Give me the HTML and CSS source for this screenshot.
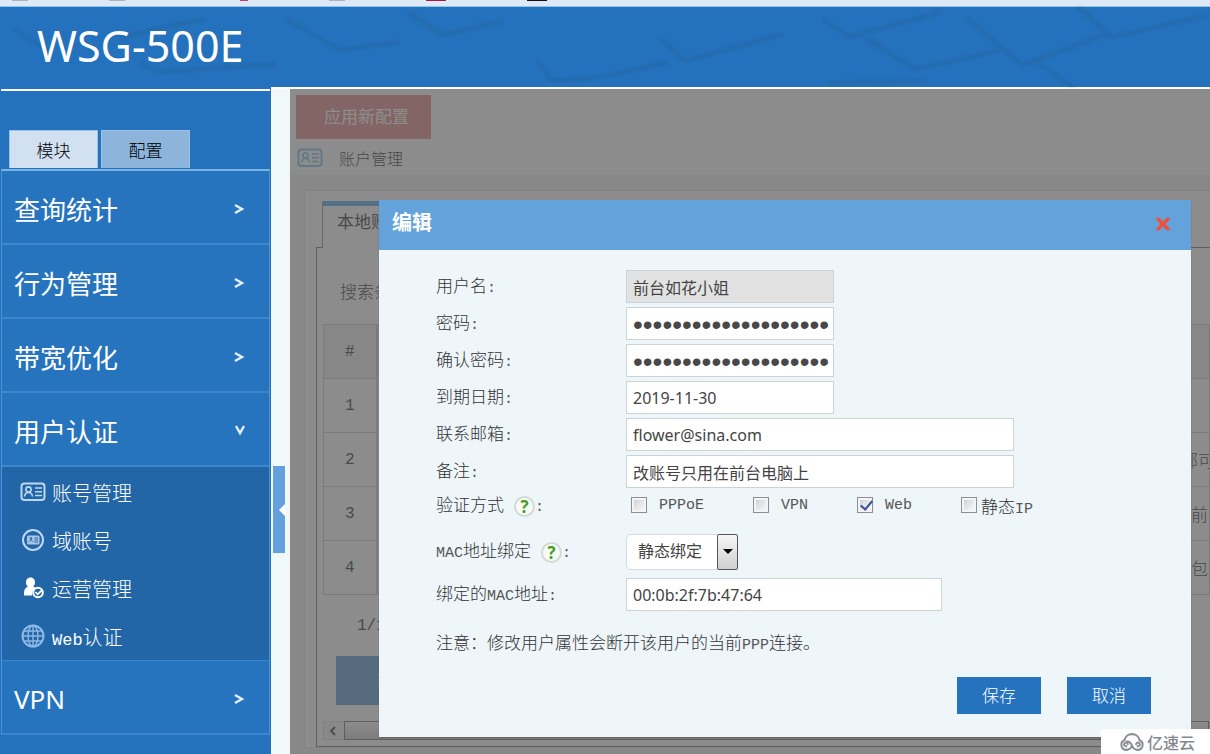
FILE: index.html
```html
<!DOCTYPE html>
<html lang="zh-CN">
<head>
<meta charset="utf-8">
<title>WSG-500E</title>
<link rel="stylesheet" href="styles.css">
</head>
<body>
<svg class="defs" aria-hidden="true">
  <symbol id="card" viewBox="0 0 26 20">
    <rect x="1.5" y="1.5" width="23" height="16.500" rx="3" fill="none" stroke="currentColor" stroke-width="2"/>
    <circle cx="8.500" cy="7.500" r="2.600" fill="none" stroke="currentColor" stroke-width="1.600"/>
    <path d="M4.500 14.500c.3-2.600 1.800-4 4-4s3.700 1.400 4 4M15 6h7M15 9.800h7M15 13.500h7" fill="none" stroke="currentColor" stroke-width="1.600"/>
  </symbol>
</svg>
<div class="strip"><i class="dot"></i><i class="dot"></i><i class="dot rose"></i><i class="dot"></i><i class="dot red"></i><i class="dot black"></i></div>
<header class="top">
  <svg class="keys" viewBox="0 0 1210 80" preserveAspectRatio="xMinYMin slice" aria-hidden="true">
    <g fill="none" stroke="#266099" stroke-opacity=".34" stroke-width="5" stroke-linejoin="round">
      <path d="M14 22l34 22M120 30l84-18M140 56l20 9 116-8M286 12l54 31 60-8M408 6l36 22 60-14M537 54l14 19c40 2 80-10 118-18"/>
      <path d="M661 32l24 22 99-27M822 12l28 18 90-25M866 32l50 30c30-6 60-14 88-20M966 10l56 48 88-32M1036 54l56 40M1078 0l34 30 98-22M826 76l100-2"/>
    </g>
  </svg>
  <h1>WSG-500E</h1>
</header>
<div class="page">
  <nav class="side">
    <div class="tabs"><button class="tab on">模块</button><button class="tab">配置</button></div>
    <ul class="menu">
      <li><a href="#"><span>查询统计</span><svg viewBox="0 0 12 12"><path d="M2 2l7 4-7 4"/></svg></a></li>
      <li><a href="#"><span>行为管理</span><svg viewBox="0 0 12 12"><path d="M2 2l7 4-7 4"/></svg></a></li>
      <li><a href="#"><span>带宽优化</span><svg viewBox="0 0 12 12"><path d="M2 2l7 4-7 4"/></svg></a></li>
      <li><a href="#"><span>用户认证</span><svg viewBox="0 0 12 12"><path d="M3 1l4 7 4-7"/></svg></a>
        <ul class="sub">
          <li><a href="#"><svg viewBox="0 0 26 20"><use href="#card"/></svg>账号管理</a></li>
          <li><a href="#"><svg viewBox="0 0 24 24"><circle cx="12" cy="12" r="10" fill="none" stroke="currentColor" stroke-width="2"/><rect x="6" y="7.500" width="12.500" height="9" rx="1.500" fill="#a9c6e4"/><path d="M8 14c.3-2 3.700-2 4 0M13.500 10h3.500M13.500 12h3.500M13.500 14h3.500" stroke="#2266a8" fill="none"/><circle cx="10" cy="10.500" r="1.200" fill="#2266a8"/></svg>域账号</a></li>
          <li><a href="#"><svg viewBox="0 0 24 24"><path d="M9.500 1.500c3 0 4.500 2.300 4.500 5 0 2-.8 3.200-1.800 4.200 1.500.5 2.900 1 4 1.800-4 .5-6 3.500-5 7H3c0-5 .3-7.500 4-8.800C5.700 9.700 5 8.500 5 6.500c0-2.700 1.500-5 4.500-5z" fill="#fff"/><circle cx="17" cy="16.500" r="4.800" fill="none" stroke="#fff" stroke-width="2"/><path d="M14.500 16l2.200 2.300 4-4" fill="none" stroke="#fff" stroke-width="1.800"/></svg>运营管理</a></li>
          <li><a href="#"><svg class="globe" viewBox="0 0 24 24"><g fill="none" stroke="currentColor" stroke-width="1.400"><circle cx="12" cy="12" r="10.500" stroke-width="2"/><ellipse cx="12" cy="12" rx="5" ry="10.500"/><path d="M12 1v22M1 12h22M3 7h18M3 17h18"/></g></svg><span><span class="mono">Web</span>认证</span></a></li>
        </ul>
      </li>
      <li><a href="#"><span>VPN</span><svg viewBox="0 0 12 12"><path d="M2 2l7 4-7 4"/></svg></a></li>
    </ul>
  </nav>
  <div class="gutter"><button class="handle" aria-label="收起"></button></div>
  <main class="main">
    <div class="bar"><button class="apply">应用新配置</button></div>
    <div class="crumb"><svg viewBox="0 0 26 20"><use href="#card"/></svg><span>账户管理</span></div>
    <div class="well">
      <section class="panel">
        <div class="ptab">本地账户</div>
        <div class="inner">
          <div class="search">搜索条件</div>
          <table>
            <tr><th>#</th><th></th></tr>
            <tr><td>1</td><td></td></tr>
            <tr><td>2</td><td><span class="cut wide">全部可</span></td></tr>
            <tr><td>3</td><td><span class="cut">前台</span></td></tr>
            <tr><td>4</td><td><span class="cut">包括</span></td></tr>
          </table>
          <div class="pager">1/1</div>
          <button class="add">新增账户</button>
          <div class="scroll"><svg viewBox="0 0 10 10"><path d="M7 1L3 5l4 4" fill="none" stroke="#444" stroke-width="2"/></svg><i></i></div>
        </div>
      </section>
    </div>
    <div class="overlay">
      <section class="dialog" role="dialog" aria-labelledby="dt">
        <div class="dhead"><h2 id="dt">编辑</h2><button class="close" aria-label="关闭"><svg viewBox="0 0 16 16"><path d="M3 3l10 10M13 3L3 13" stroke="#f0513c" stroke-width="3.500" stroke-linecap="round"/></svg></button></div>
        <form class="form">
          <div class="row"><label for="u">用户名<span class="mono">:</span></label><input id="u" class="w1 off" value="前台如花小姐" readonly></div>
          <div class="row"><label for="p">密码<span class="mono">:</span></label><input id="p" class="w1 pw" type="password" value="12345678901234567890"></div>
          <div class="row"><label for="p2">确认密码<span class="mono">:</span></label><input id="p2" class="w1 pw" type="password" value="12345678901234567890"></div>
          <div class="row"><label for="d">到期日期<span class="mono">:</span></label><input id="d" class="w1" value="2019-11-30"></div>
          <div class="row"><label for="m">联系邮箱<span class="mono">:</span></label><input id="m" class="w3" value="flower@sina.com"></div>
          <div class="row"><label for="r">备注<span class="mono">:</span></label><input id="r" class="w3" value="改账号只用在前台电脑上"></div>
          <div class="row short"><span class="lab">验证方式<i class="help">?</i><span class="mono">:</span></span>
            <div class="checks">
              <label><input type="checkbox"><span class="mono">PPPoE</span></label>
              <label><input type="checkbox"><span class="mono">VPN</span></label>
              <label><input type="checkbox" checked><span class="mono">Web</span></label>
              <label class="tight"><input type="checkbox"><span>静态<span class="mono">IP</span></span></label>
            </div>
          </div>
          <div class="row tall"><label for="b"><span class="mono">MAC</span>地址绑定<i class="help">?</i><span class="mono">:</span></label>
            <div class="pick"><select id="b"><option>静态绑定</option></select><i class="arrow"></i></div></div>
          <div class="row"><label for="mac">绑定的<span class="mono">MAC</span>地址<span class="mono">:</span></label><input id="mac" class="w2" value="00:0b:2f:7b:47:64"></div>
          <p class="note">注意：修改用户属性会断开该用户的当前<span class="mono">PPP</span>连接。</p>
          <div class="acts"><button type="button">保存</button><button type="button">取消</button></div>
        </form>
      </section>
    </div>
  </main>
</div>
<div class="mark"><svg viewBox="0 0 28 20"><g fill="none" stroke="#8b8f96" stroke-width="2.200" stroke-linecap="round"><path d="M8 18.500a5.500 5.500 0 0 1-2-10.600C6.500 4 10 1.500 14 1.500s7.500 2.500 8 6.400a5.500 5.500 0 0 1-2 10.600c-3 0-5-2-6-4.500s-3-5-5.500-4.500"/><path d="M8 18.500c3 0 5-2 6-4.500M8 14.500a2 2 0 1 1 1.500-2M20 14.500a2 2 0 1 0-1.500-2"/></g></svg><span>亿速云</span></div>
</body>
</html>
```
FILE: styles.css
```css
* { box-sizing: border-box; }
body { margin: 0; height: 100vh; overflow: hidden; display: flex; flex-direction: column; background: #2472bd; font-family: "Liberation Sans", "Noto Sans CJK SC", sans-serif; font-size: 17px; font-weight: 300; color: #333; }
button, input, select { font: inherit; color: inherit; border: 0; padding: 0; margin: 0; border-radius: 0; }
ul { list-style: none; margin: 0; padding: 0; }
a { color: inherit; text-decoration: none; }
i { font-style: normal; }
.mono { font-family: "Liberation Mono", monospace; font-size: 15px; }
.form .mono { color: #555; }
.defs { position: absolute; width: 0; height: 0; }

.strip { flex: none; height: 7px; background: #dde9f7; border-bottom: 1px solid #94c4ea; display: flex; gap: 81px; padding-left: 12px; }
.dot { width: 16px; height: 1px; background: #aeb4bd; }
.dot.rose { width: 8px; margin-left: 34px; background: #b0446a; }
.dot.red { width: 20px; background: #a81e40; }
.dot.black { width: 20px; background: #111; }

.top { flex: none; height: 80px; position: relative; background: #2472bd; padding: 0 0 4px 37px; display: flex; align-items: center; }
.keys { position: absolute; inset: 0; width: 100%; height: 100%; filter: blur(1px); }
h1 { position: relative; margin: 0; font: 400 43px "Noto Sans", sans-serif; color: #fff; }

.page { flex: 1; min-height: 0; display: flex; border-top: 2px solid #fff; }
.side { flex: none; width: 271px; margin-top: -2px; padding: 2px 1px 0; background: #2472bd; color: #fff; }
.tabs { display: flex; gap: 3px; align-items: flex-end; height: 80px; padding: 0 0 1px 8px; border-top: 2px solid #fff; }
.tab { width: 89px; height: 38px; background: #8db5dc; color: #000; border: 1px solid #9ec1e4; border-bottom: 0; }
.tab.on { background: #d2e1f1; }
.menu { border: 1px solid #4b92d6; border-width: 0 1px; border-top: 2px solid #7db4e6; }
.menu > li > a { display: flex; justify-content: space-between; align-items: center; height: 74px; padding: 3px 24px 0 12px; border-bottom: 2px solid #3c87d0; background: #2673be; font-size: 26px; font-family: "Noto Sans", "Noto Sans CJK SC", sans-serif; font-weight: 400; }
.menu > li > a svg { width: 12px; height: 12px; fill: none; stroke: #e4f1fc; stroke-width: 2.4; }
.sub { background: #2266a8; padding-top: 1px; border-bottom: 1px solid #3c87d0; }
.sub a { display: flex; align-items: center; gap: 6px; height: 48px; padding-left: 18px; font-size: 20px; }
.sub svg { width: 26px; height: 24px; color: #bcd8f2; }
.sub .globe { color: #8db9e4; }
.sub .mono { font-size: 17px; }

.gutter { flex: none; width: 19px; background: #f0f9f8; padding: 377px 5px 0 2px; }
.handle { display: flex; width: 12px; height: 87px; background: #64a0dd; align-items: center; justify-content: flex-end; }
.handle::before { content: ""; border: 6px solid transparent; border-left: 0; border-right-color: #fff; }

.main { flex: 1; min-width: 0; position: relative; display: flex; flex-direction: column; background: #fff; overflow: hidden; }
.bar { padding: 6px 6px 0; }
.apply { display: block; width: 135px; height: 44px; background: #e48a8a; color: #fff; font-size: 17px; font-weight: 400; padding: 0 0 3px 6px; }
.crumb { display: flex; align-items: center; gap: 16px; height: 37px; padding: 1px 8px 0 7px; font-size: 16px; border-bottom: 1px solid #f2f2f2; }
.crumb svg { width: 26px; height: 20px; color: #7fc0ec; }
.well { flex: 1; background: #f1f1f1; padding: 14px 0 0 14px; }
.panel { height: 558px; background: #fff; border: 1px solid #e2e2e2; border-right: 0; padding: 10px 0 0 11px; }
.ptab { position: relative; width: 120px; height: 47px; margin-left: 6px; border-top: 5px solid #5aabea; border-left: 1px solid #999; background: #fff; padding: 2px 0 0 14px; font-weight: 400; }
.inner { height: 500px; margin-top: -1px; border: 1px solid #777; border-right: 0; padding-left: 6px; }
.search { height: 76px; padding: 30px 0 0 17px; }
table { width: 100%; border-collapse: collapse; table-layout: fixed; }
td, th { height: 54px; border: 1px solid #ccc; padding: 0; font: 300 16px "Liberation Mono", monospace; text-align: center; }
th { background: #eee; }
td:first-child, th:first-child { width: 53px; border-right-width: 2px; }
td:last-child { text-align: right; white-space: nowrap; overflow: hidden; }
.cut { display: inline-block; font: 300 17px "Noto Sans CJK SC", sans-serif; margin-right: -16px; }
.cut.wide { margin-right: -6px; }
.pager { height: 61px; padding: 22px 0 0 34px; font-family: "Liberation Mono", monospace; font-size: 16px; }
.add { display: block; width: 150px; height: 49px; margin-left: 13px; background: #5a98d2; color: #fff; }
.scroll { display: flex; align-items: center; height: 19px; margin-top: 16px; background: #f4f4f4; border: 1px solid #ddd; }
.scroll svg { width: 10px; height: 10px; margin: 0 6px 0 4px; }
.scroll i { flex: 1; height: 19px; background: linear-gradient(#fff, #ccc); border: 1px solid #777; }

.overlay { position: absolute; inset: 0; background: rgba(84, 84, 84, .67); padding: 111px 19px 0 89px; }
.dialog { background: #eef6fa; box-shadow: 0 1px 1px #666; }
.dhead { display: flex; justify-content: space-between; align-items: center; height: 50px; padding: 0 20px 2px 13px; background: #64a2dc; color: #fff; }
h2 { margin: 0; font-size: 20px; line-height: 26px; padding-bottom: 2px; font-weight: 700; }
.close { background: none; width: 16px; height: 16px; display: flex; }
.form { display: flex; flex-direction: column; gap: 4px; padding: 20px 40px 23px 57px; }
.row { display: flex; align-items: center; min-height: 33px; }
.row.short { min-height: 27px; }
.row.tall { margin: 9px 0 4px; min-height: 37px; }
.row > label, .lab { flex: none; width: 190px; line-height: 24px; padding-top: 2px; }
.row > input { height: 33px; min-width: 0; padding: 0 6px; border: 1px solid #ccd3d8; background: #fff; color: #444; font: 400 16px "Noto Sans", "Noto Sans CJK SC", sans-serif; }
.w1 { width: 208px; }
.w2 { width: 316px; }
.w3 { width: 388px; }
.row > .off { background: #e2e2e2; }
.row > .pw { font: 400 28px "Liberation Sans", sans-serif; padding: 2px 4px 0 6px; color: #484848; }
.help { display: inline-flex; vertical-align: middle; align-items: center; justify-content: center; width: 21px; height: 21px; margin-left: 10px; border: 2px solid #d6dad6; border-radius: 50%; background: #f7fbf5; color: #4a9c1e; font: 700 17px "Open Sans", sans-serif; }
.checks { display: flex; align-items: center; padding: 0 0 2px 5px; }
.checks label { display: flex; align-items: center; gap: 12px; margin-right: 49px; }
.checks label.tight { gap: 4px; margin: 0; }
.checks input { appearance: none; width: 16px; height: 16px; border: 1px solid #8c9096; background: linear-gradient(135deg, #c8ccd0, #fff); box-shadow: inset 0 0 0 2px #f4f4f4; display: flex; }
.checks input:checked::before { content: ""; width: 5px; height: 10px; margin: 0 0 0 5px; border: solid #3a4f96; border-width: 0 2px 2px 0; transform: rotate(40deg); }
.pick { position: relative; width: 112px; height: 36px; }
.pick select { appearance: none; width: 100%; height: 100%; border: 1px solid #d3dbe0; border-radius: 5px; background: #fff; padding: 0 0 0 11px; font-size: 16px; font-weight: 400; color: #444; }
.arrow { position: absolute; top: 0; right: 0; width: 21px; height: 36px; border: 1px solid #555; border-radius: 2px; background: linear-gradient(#f6f6f6, #d0d0d0); display: flex; align-items: center; justify-content: center; pointer-events: none; }
.arrow::before { content: ""; border: 5px solid transparent; border-bottom: 0; border-top-color: #000; }
.note { margin: 16px 0 14px; line-height: 26px; }
.acts { display: flex; justify-content: flex-end; gap: 26px; }
.acts button { width: 84px; height: 37px; padding-bottom: 3px; background: #2573bf; color: #fff; }

.mark { position: absolute; right: 0; bottom: 0; width: 109px; height: 25px; display: flex; align-items: center; gap: 2px; padding-left: 18px; background: #fff; color: #85898f; font-size: 16px; font-weight: 500; }
.mark svg { width: 26px; height: 20px; }
```
